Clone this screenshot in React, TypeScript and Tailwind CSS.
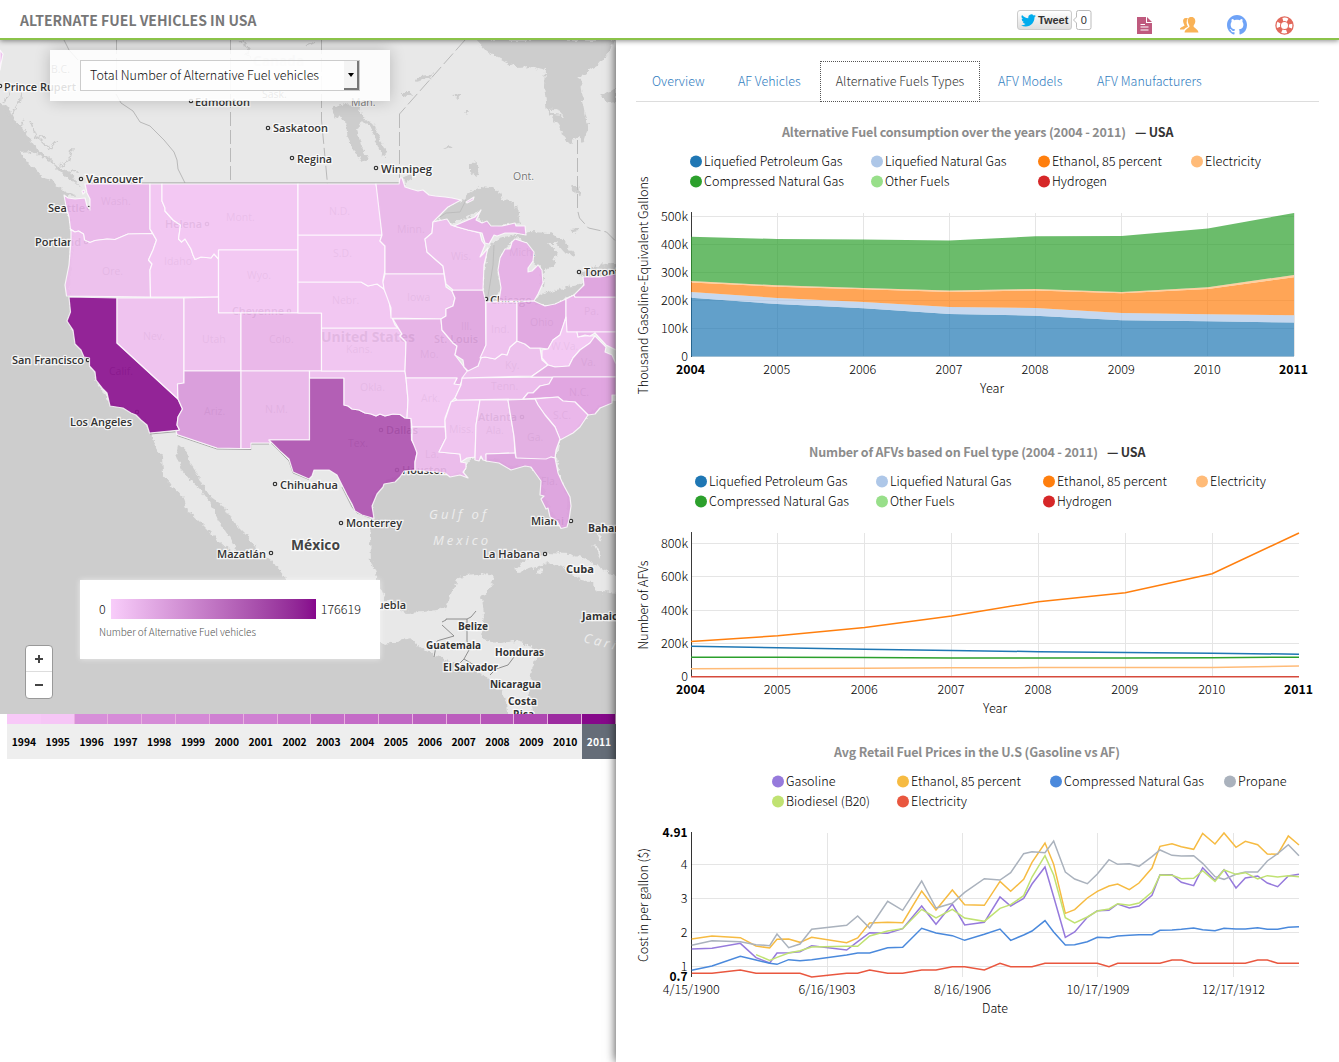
import React from "react";

const BODY = "font-['Noto_Sans_CJK_SC','Open_Sans',sans-serif]";

const STATES: [string, string][] = [
  ["#e9b4e9", "85,184 150,184 150,229 152.5,233.5 128,234 115,239.5 107,239 95,240.5 90,242.5 84.5,240 83.5,234 78.5,231 75,232 70.5,229 69,217 66,206 64,195 68,198 75,199 85,198 87,206 90,210 90,199 87,193"],
  ["#edbded", "71,230 75,232 78.5,231 83.5,234 84.5,240 90,242.5 95,240.5 107,239 115,239.5 128,234 152.5,233.5 156.5,240 153,250 148.5,260 152,264 150,270 150.5,297 66.5,296 65,285 69,265 71,240"],
  ["#8b128f", "69,297 117,298 117,343 178,399 182.5,409 178,417 177,425 179.5,430 149.5,433 147,425 141,420 136,415 131,413 123,408 110,406 107,393 103,389 96,380 95,372 89.5,366 89.5,358 84,357 81,350 75,344 73,330 67,321 70.5,312"],
  ["#efbfef", "117,298 184,298 184,383 177.5,384 178,399 117,343"],
  ["#f2c3f2", "150,184 162,184 162,201 165,208 165,211 173,220 180.5,225 178.5,239 181.5,242 185,239 191,249 193,255 195,259.5 201,257 211,258 214,254 218.5,259 218.5,297 150.5,297 150,270 152,264 148.5,260 153,250 156.5,240 152,232 150,229"],
  ["#f3c4f3", "162,184 298,184 298,250 218.5,250 218.5,259 214,254 211,258 201,257 195,259.5 193,255 191,249 185,239 181.5,242 178.5,239 180.5,225 173,220 165,211 165,208 162,201"],
  ["#f3c5f3", "218.5,250 298,250 298,313 218.5,313"],
  ["#efbfef", "184,298 218.5,297 218.5,313 241,313 241,371 184,371"],
  ["#e9b3e8", "241,313 321.5,313 321.5,371 241,371"],
  ["#d898da", "184,371 241,371 241,448.5 217,448 177,434.5 176,431 179.5,430 177,425 178,417 182.5,409 178,399 177.5,384 184,383"],
  ["#e9b5e9", "241,371 309.5,371 309.5,440 269,440 271,443 251,443 251,448.5 241,448.5"],
  ["#ae53b0", "309.5,378 344,378 344,405 348,406 352,409 359,410 365,413 371,414 376,416 380,414 385,416 393,414 400,414.5 405,418 411,418.5 411.5,440 416,448 417,453 415,462 415,470 404,471 400,477 395,482 384,484 383,487 377,494 372,506 374,518.5 362,515 355,511 352,504 347,495 342,485 337,475 329,470 314,470 312,476 309,479 293,472 289,459 280,451 269,440 309.5,440"],
  ["#eebeee", "309.5,371 405,371 406,378 408,400 407,418 405,418 400,414.5 393,414 385,416 380,414 376,416 371,414 365,413 359,410 352,409 348,406 344,405 344,378 309.5,378"],
  ["#f1c2f1", "321.5,328 398,328 402,334 400,336 406,342 405,371 321.5,371"],
  ["#f2c3f2", "298,282 361,282 368,286 377,284 384,289 389,300 391,315 395,325 398,328 321.5,328 321.5,313 298,313"],
  ["#f3c5f3", "298,235 382,235 380,241 385,246 385,270 383,280 384,289 377,284 368,286 361,282 298,282"],
  ["#f3c5f3", "298,184 376,184 380,205 382,235 298,235"],
  ["#e9b5e9", "376,184 399,184 400,178 402,178 405,187 411,189 418,191 423,190 429,195 435,196 445,197 452,198 461,200 448,207 440,215 433,222 432,233 425,239 427,252 436,260 443,266 444,274 385,274 385,246 380,241 382,235"],
  ["#efc0ef", "385,274 444,274 446,287 452,291 455,298 453,306 446,309 446,316 441,319 391,318 391,308 384,289 383,282"],
  ["#e6afe6", "393,319 441,319 442,330 453,343 457,346 455,355 464,367 468,372 463,378 460,385 454,384 457,378 406,378 405,371 406,342 400,336 402,334"],
  ["#f2c4f2", "406,378 457,378 454,384 461,385 455,398 451,402 445,418 445,427 412,427 411,418.5 407,418 408,400"],
  ["#eab7ea", "412,427 445,427 446,438 439,452 460,454 461,462 466,463 466,468 463,472 468,478 460,475 450,477 445,473 437,472 425,471 415,470 415,462 417,453 412,440"],
  ["#f0c1f0", "457,400 480,400 476,425 475,457 467,458 461,462 460,454 439,452 446,438 445,420 451,402"],
  ["#edbded", "480,400 508,400 514,436 515,453 486,454 487,461 483,460 481,456 479,461 475,460 476,425"],
  ["#ebb8eb", "462,378 553,377 549,384 540,386 533,393 528,393 523,399 457,400 455,398 461,385"],
  ["#edbded", "468,370 478,366 480,358 485,357 495,359 502,354 507,355 510,347 517,341 525,344 530,348 540,348 542,360 548,365 532,376 462,378"],
  ["#dfa4df", "453,290 483,290 485.5,301 486,345 481,358 478,366 468,371 464,367 463,360 455,355 457,346 453,343 442,330 441,319 446,316 446,309 453,306 455,298 452,291"],
  ["#edbced", "433,222 447,219 451,225 457,227 468,230 480,233 482,241 485,245 480,257 483,254 488,248 484,265 483,290 453,290 446,284 443,266 436,260 427,252 425,239 432,233"],
  ["#e5ade5", "454,226 475,217 481,210 476,220 482,223 487,221 491,226 502,226 515,223 516,226 525,226 526,235 515,233 505,233 497,236 494,235 489,244 485,243 482,233 468,230"],
  ["#e5ade5", "515,239 527,243 534,252 533,261 528,268 528,272 532,271 538,265 542,270 543,283 538,294 534,301 499,301 501,288 498,270 500,258 505,249 510,249 512,242"],
  ["#efbfef", "486,302 517,302 517,341 510,347 507,355 502,354 495,359 485,357 480,358 486,345"],
  ["#dfa3df", "517,302 534,301 545,306 555,304 566,299 566,317 563,327 560,335 553,340 548,349 540,348 530,348 525,344 517,341"],
  ["#e9b3e9", "566,299 574,295 575,297 616,297 616,332 566,332"],
  ["#dd9fdd", "574,295 584,285 583,277 600,277 616,274 616,297 575,297"],
  ["#f3c6f3", "566,317 567,332 577,332 578,337 585,336 595,336 590,343 580,350 573,358 569,366 555,367 548,365 542,358 542,350 548,349 553,340 560,335"],
  ["#e1a8e1", "531,377 548,365 555,367 569,366 573,358 580,350 590,343 595,336 606,347 605,352 612,355 616,364 616,377"],
  ["#e9b3e9", "577,332 616,332 616,350 606,345 595,333 590,336 585,335 578,337"],
  ["#df9fdf", "553,377 616,377 616,395 612,395 612,403 600,408 595,414 588,415 575,402 563,401 558,397 523,399 528,393 533,393 540,386 549,384"],
  ["#e9b2e9", "535,399 558,397 563,401 575,402 588,415 580,427 573,433 560,440 555,427 545,415 538,405"],
  ["#e2aae2", "508,400 535,399 538,405 545,415 555,427 560,439 556,450 555,458 551,457 549,460 516,458 514,436"],
  ["#dc9fdd", "486,454 515,453 516,458 546,459 551,457 555,458 558,473 563,484 570,497 571,506 569,520 567,527 561,528.5 557,521 550,517 548,508 546,509 541,499 544,496 540,495 541,481 531,467 525,466 511,470 499,463 486,461"],
];

const LAKES = [
  // Hudson and James Bay
  "476,40 487,52 503,60 517,68 530,67 545,71 544,86 547,111 557,125 565,138 572,145 575,138 580,135 583,143 588,125 583,100 581,80 577,78 597,66 610,50 613,40",
  // Superior
  "435,222 447,208 463,199 470,193 480,187 490,188 498,189 503,200 515,202 518,212 520,223 507,225 490,226 480,220 477,211 466,217 453,223 440,219",
  // Michigan
  "500,238 515,234 516,239 507,247 500,257 498,270 501,287 497,300 485,303 483,275 487,256 484,254 490,246",
  // Huron
  "513,236 530,232 550,233 565,242 575,256 566,254 556,243 548,243 557,253 553,267 545,270 543,286 540,284 540,268 532,258 531,248 523,240",
  // Erie
  "533,301 547,292 567,287 583,284 582,290 565,299 552,305 537,305",
  // Ontario
  "578,275 593,267 616,263 616,276 587,278",
  // Winnipeg
  "332,108 345,104 358,108 366,120 374,125 380,140 385,148 386,157 381,155 376,143 372,130 362,120 357,130 361,145 368,160 362,163 353,148 346,133 345,120 335,115",
  "416,82 420,76 426,75 433,72 430,78 424,80",
  "401,92 410,92 412,95 405,97",
  "453,95 462,94 460,98 456,97",
  "465,111 470,111 468,114",
  "443,148 449,145 453,146 446,149",
  "470,163 475,161 480,168 477,176 470,172",
  "404,177 411,174 412,180 406,184",
  "600,95 610,92 616,88 616,102 608,103",
  "570,229 578,228 578,231 572,232",
  "570,186 578,186 580,195 573,190",
];

const PLACES: { t: string; x: number; y: number; w: number; dot?: [number, number]; s?: number; c?: string }[] = [
  { t: "Prince Rupert", x: 4, y: 90.5, w: 72, dot: [0, 86] },
  { t: "Edmonton", x: 195, y: 105.5, w: 55, dot: [191, 101] },
  { t: "Saskatoon", x: 273, y: 132, w: 55, dot: [268, 128] },
  { t: "Regina", x: 297, y: 162.5, w: 35, dot: [292, 158] },
  { t: "Winnipeg", x: 381, y: 172.5, w: 51, dot: [376, 168] },
  { t: "Vancouver", x: 86, y: 183, w: 57, dot: [81, 179] },
  { t: "Seattle", x: 48, y: 212, w: 37, dot: [89, 208] },
  { t: "Portland", x: 35, y: 246, w: 46, dot: [86, 242] },
  { t: "San Francisco", x: 12, y: 364, w: 72, dot: [88, 360] },
  { t: "Los Angeles", x: 70, y: 426, w: 62, dot: [137, 412] },
  { t: "Helena", x: 165, y: 228, w: 37, dot: [207, 224] },
  { t: "Cheyenne", x: 232, y: 315, w: 52, dot: [289, 311] },
  { t: "United States", x: 321, y: 342, w: 94, s: 13.5 },
  { t: "St. Louis", x: 434, y: 343, w: 44 },
  { t: "Chicago", x: 490, y: 304, w: 42, dot: [486, 299] },
  { t: "Toronto", x: 584, y: 276, w: 42, dot: [579, 272] },
  { t: "Atlanta", x: 478, y: 421, w: 39, dot: [522, 417] },
  { t: "Dallas", x: 386, y: 434, w: 32, dot: [381, 430] },
  { t: "Houston", x: 402, y: 474, w: 45, dot: [397, 470] },
  { t: "Chihuahua", x: 280, y: 488.5, w: 58, dot: [275, 484] },
  { t: "Monterrey", x: 346, y: 527, w: 56, dot: [341, 523] },
  { t: "México", x: 291, y: 549.5, w: 49, s: 14.2, c: "#444" },
  { t: "Mazatlán", x: 217, y: 557.5, w: 49, dot: [271, 553] },
  { t: "Miami", x: 531, y: 525, w: 33, dot: [571, 521] },
  { t: "Bahamas", x: 588, y: 532, w: 48, s: 10.2 },
  { t: "La Habana", x: 483, y: 558, w: 57, dot: [545, 554] },
  { t: "Cuba", x: 566, y: 573, w: 28, s: 10.8 },
  { t: "Puebla", x: 370, y: 608.5, w: 36 },
  { t: "Jamaica", x: 582, y: 619.5, w: 42, s: 10.2 },
  { t: "Belize", x: 458, y: 630, w: 30, s: 10.2 },
  { t: "Guatemala", x: 426, y: 649, w: 55, s: 10.2 },
  { t: "Honduras", x: 495, y: 655.5, w: 49, s: 10.2 },
  { t: "El Salvador", x: 443, y: 671, w: 55, s: 10.2 },
  { t: "Nicaragua", x: 490, y: 687.5, w: 51, s: 10.2 },
  { t: "Costa", x: 508, y: 704.5, w: 29, s: 10.2 },
  { t: "Rica", x: 513, y: 718, w: 21, s: 10.2 },
];

const REGIONS: [string, number, number][] = [
  ["B.C.", 51, 73], ["Sask.", 262, 98], ["Man.", 351, 106], ["Ont.", 513, 180],
  ["Wash.", 101, 205], ["Ore.", 102, 275], ["Idaho", 164, 265], ["Mont.", 226, 221], ["Wyo.", 247, 279],
  ["Nev.", 143, 340], ["Utah", 202, 343], ["Colo.", 269, 343], ["Calif.", 109, 375], ["Ariz.", 204, 415],
  ["N.M.", 265, 413], ["N.D.", 329, 215], ["S.D.", 333, 257], ["Nebr.", 332, 304], ["Kans.", 346, 353],
  ["Okla.", 360, 391], ["Tex.", 348, 447], ["Minn.", 397, 233], ["Iowa", 407, 301], ["Mo.", 420, 358],
  ["Ark.", 421, 402], ["La.", 425, 458], ["Wis.", 451, 260], ["Ill.", 461, 330], ["Mich.", 509, 256],
  ["Ind.", 491, 333], ["Ohio", 530, 326], ["Pa.", 584, 315], ["W.Va.", 551, 350], ["Va.", 581, 366],
  ["Ky.", 505, 369], ["Tenn.", 491, 390], ["N.C.", 569, 396], ["S.C.", 553, 419], ["Miss.", 449, 433],
  ["Ala.", 486, 434], ["Ga.", 527, 441], ["Fla.", 541, 485],
];

function UsMap() {
  return (
    <svg viewBox="0 40 616 674" className="block h-[674px] w-[616px]" fontFamily="Open Sans">
      <defs>
        {/* roughens the coastlines */}
        <filter id="coast" filterUnits="userSpaceOnUse" x="-10" y="30" width="640" height="694">
          <feTurbulence type="fractalNoise" baseFrequency=".18" numOctaves="3" seed="4" />
          <feDisplacementMap in="SourceGraphic" scale="7" xChannelSelector="R" yChannelSelector="G" />
        </filter>
      </defs>
      <rect x="0" y="40" width="616" height="674" fill="#cdcdcd" />
      <g filter="url(#coast)">
        <g fill="#e8e8e8">
          <path d="M-10 30H630V395L600 406 588 415 573 432 560 440 556 458 560 475 567 495 568 520 562 524 552 512 545 495 543 481 529 465 511 466 495 458 470 460 464 472 450 474 415 468 400 475 384 482 373 498 372 517 370 535 371 562 378 582 386 600 405 613 425 612 446 608 452 592 457 579 468 575 482 573 494 576 490 588 482 597 484 615 481 638 500 643 515 641 528 644 536 655 531 675 529 698 537 724H509L507 702 500 690 488 678 470 668 445 660 425 651 410 638 385 644 350 635 315 618 290 595 284 576 272 561 258 551 247 536 235 524 225 508 211 498 203 485 198 474 190 462 185 449 178 446 176 455 182 470 190 480 201 490 210 502 219 522 228 535 236 550 232 553 219 541 200 522 188 511 184 498 172 487 163 474 162 456 153 442 151 432 143 419 123 406 110 403 98 384 91 364 79 347 70 322 70 290 72 240 67 195 75 196 82 190 70 172 58 167 48 158 37 149 29 138 23 127 14 120 9 108 -10 96Z" />
          <path d="M21 152 33 151 41 157 52 163 64 175 76 183 83 191 84 197 73 194 62 189 50 180 43 178 36 170 28 164Z" />
          <path d="M514 570 526 560 545 553 570 554 588 560 600 567 626 583 626 593 598 592 593 583 578 578 563 566 548 563 533 568 520 572Z" />
          <path d="M538 569l4 1-1 4-4-1z" />
          <path d="M592 543l8 8 1 8-4-6zM594 529l8 8-2 5z" />
          <path d="M606 619l20-4v8z" />
        </g>
        <g fill="#cdcdcd">
          {LAKES.map((p) => (
            <polygon key={p} points={p} />
          ))}
        </g>
        <path d="M549 109q8-2 15 7l-10-1z" fill="#e8e8e8" />
        <path d="M240 40l10 8-4 6 6 4M307 45l8-4M4 110l14 18 6-8M20 100l-8 14M30 120l6 16 10 2M36 136l12 12M10 90l-6 12M22 92l-2 12M48 150l8-10M60 166l10-6 2-12M66 170l12 2" fill="none" stroke="#cdcdcd" strokeWidth="1.500" />
      </g>
      <g fill="none" stroke="#b9b9b9" strokeWidth="1">
        <path d="M64 40l5 10 9 10M116 94l5 9 12 8 7 11 10 4 14 14 10 12 3 8 1 9 7 14" />
        <path d="M230.500 40V184M116.500 40V94M321.500 40V120l6 64M399.500 114V178M465 40L399.500 114M577.500 140V210l2 8 9 10 18 4 10 10" strokeDasharray="14 4" />
        <path d="M432 222l14-9 14-1 6-12M494 245l-1 20-4 25-2 12" strokeWidth=".8" />
        <path d="M88 183H399" stroke="#999" />
      </g>
      <g fill="none" stroke="#777" strokeWidth=".8">
        <path d="M442 622l4-2V619H467V641M442 625l12 11-14 4-3 1-3 16M467 619l4-2 5-6M467 641l2 9-5 9 10 6M464 659l-4 4M490 675l6-6 12-4 6-8" />
        <path d="M150 434l29-2.500M177 435.500l40 13.500 34 .5 0-5.500 18 0M269 441l20 20 4 12 16 6.500M342 487l5 10 5 10 5 6 16 6" strokeOpacity=".7" />
      </g>
      <g fontSize="13" fontStyle="italic" fill="#eeeeee" letterSpacing="3">
        <text x="429" y="519" textLength="60">Gulf of</text>
        <text x="433" y="545" textLength="58">Mexico</text>
        <text x="583" y="642" transform="rotate(14 583 642)">Caribbean</text>
      </g>
      <text x="253" y="66" fontSize="13.500" fontWeight="600" fill="#d0d0d0" textLength="51">Canada</text>
      <g fontSize="10.500" fill="#777" stroke="#fff" strokeWidth="1.600" paintOrder="stroke" strokeOpacity=".5">
        {REGIONS.map(([t, x, y]) => (
          <text key={t} x={x} y={y}>{t}</text>
        ))}
      </g>
      {PLACES.map((p) => (
        <g key={p.t}>
          {p.dot && <circle cx={p.dot[0]} cy={p.dot[1]} r="1.700" fill="#fff" stroke="#333" strokeWidth="1.200" />}
          <text x={p.x} y={p.y} fontSize={p.s ?? 10.9} fontWeight={p.s ? 700 : 600} fill={p.c ?? "#333"} stroke="#fff" strokeWidth="2.500" strokeOpacity=".8" paintOrder="stroke" textLength={p.w} lengthAdjust="spacingAndGlyphs">
            {p.t}
          </text>
        </g>
      ))}
      <g stroke="#fff" strokeWidth="1.200" strokeOpacity=".8" strokeLinejoin="round" fillOpacity=".92">
        {STATES.map(([c, p]) => (
          <polygon key={p} points={p} fill={c} />
        ))}
        <path d="M466 202l8-5-1 3-6 3zM0 50l3 4-2 10-1 6zM82 191l2-1 1 2-2 2z" fill="#edbded" />
      </g>
    </svg>
  );
}

function Label({ x, y, w, children, bold, anchor = "middle" }: { x: number; y: number; w?: number; children: string; bold?: boolean; anchor?: "start" | "middle" | "end" }) {
  return (
    <text x={x} y={y} textAnchor={anchor} textLength={w} lengthAdjust="spacingAndGlyphs" fontWeight={bold ? 700 : 300}>
      {children}
    </text>
  );
}

const YEARS = ["2004", "2005", "2006", "2007", "2008", "2009", "2010", "2011"];

function YearAxis({ step, y }: { step: number; y: number }) {
  return (
    <>
      {YEARS.map((t, i) => (
        <Label key={t} x={690.5 + i * step} y={y} bold={i === 0 || i === 7} w={i === 0 || i === 7 ? 29 : 27}>{t}</Label>
      ))}
    </>
  );
}

const AREAS: [string, number[], number[]][] = [
  ["#1f77b4", [297.7, 304, 308.3, 314, 315.7, 320.3, 321.3, 322.5], [356.5, 356.5, 356.5, 356.5, 356.5, 356.5, 356.5, 356.5]],
  ["#aec7e8", [292, 298, 302, 307, 308, 313, 314.3, 315.3], [297.7, 304, 308.3, 314, 315.7, 320.3, 321.3, 322.5]],
  ["#ff7f0e", [282.5, 286.7, 289.2, 292, 290.5, 293.3, 288.9, 277.3], [292, 298, 302, 307, 308, 313, 314.3, 315.3]],
  ["#ffbb78", [281, 285.3, 288, 290.6, 289, 291.9, 287.2, 275], [282.5, 286.7, 289.2, 292, 290.5, 293.3, 288.9, 277.3]],
  ["#2ca02c", [236.7, 239, 239.5, 240.5, 236.3, 236, 228.5, 213], [281, 285.3, 288, 290.6, 289, 291.9, 287.2, 275]],
];

const line = (ys: number[], step: number) => ys.map((y, i) => `${691 + i * step},${y}`);

function ConsumptionChart() {
  const step = 603 / 7;
  return (
    <svg viewBox="616 195 723 210" className="block h-[210px] w-[723px] overflow-visible text-[12.500px]">
      <g stroke="#e5e5e5" shapeRendering="crispEdges">
        {YEARS.map((t, i) => <path key={t} d={`M${691 + i * step} 213V356`} />)}
        {[216.5, 244.5, 272.5, 300.5, 328.5, 356.5].map((y) => <path key={y} d={`M691 ${y}H1294`} />)}
      </g>
      <path d="M691.500 212V357" stroke="#000" strokeOpacity=".75" />
      {AREAS.map(([c, top, bottom]) => (
        <polygon key={c} fill={c} fillOpacity=".7" points={[...line(top, step), ...line(bottom, step).reverse()].join(" ")} />
      ))}
      {["500k", "400k", "300k", "200k", "100k"].map((t, i) => (
        <Label key={t} x={688} y={221 + i * 28} anchor="end" w={27}>{t}</Label>
      ))}
      <Label x={688} y={361} anchor="end">0</Label>
      <YearAxis step={step} y={374} />
      <Label x={992} y={393} w={24}>Year</Label>
      <text transform="translate(648 285.500) rotate(-90)" textAnchor="middle" textLength="218" fontWeight="300">Thousand Gasoline-Equivalent Gallons</text>
    </svg>
  );
}

const SERIES: [string, number[]][] = [
  ["#1f77b4", [646.3, 647.8, 649.3, 650.4, 651.7, 652.5, 653.2, 654.2]],
  ["#2ca02c", [657.2, 657.2, 657.6, 658, 658, 658, 657.7, 657.2]],
  ["#ffbb78", [668.8, 668.5, 668.2, 667.8, 667.6, 667.5, 667.4, 666]],
  ["#ff7f0e", [641.4, 635.8, 627.4, 616, 601.7, 592.7, 573.7, 533]],
  ["#d64a3c", [676.7, 676.7, 676.7, 676.7, 676.7, 676.7, 676.7, 676.7]],
];

function VehiclesChart() {
  const step = 608 / 7;
  return (
    <svg viewBox="616 515 723 210" className="block h-[210px] w-[723px] overflow-visible text-[12.500px]">
      <g stroke="#e5e5e5" shapeRendering="crispEdges">
        {YEARS.slice(0, 7).map((t, i) => <path key={t} d={`M${691 + i * step} 533V677`} />)}
        {[543.5, 576.5, 610.5, 643.5, 676.5].map((y) => <path key={y} d={`M691 ${y}H1299`} />)}
      </g>
      <path d="M691.500 532V677" stroke="#000" strokeOpacity=".75" />
      {SERIES.map(([c, ys]) => (
        <polyline key={c} fill="none" stroke={c} strokeWidth="1.500" points={line(ys, step).join(" ")} />
      ))}
      {["800k", "600k", "400k", "200k"].map((t, i) => (
        <Label key={t} x={688} y={548 + i * 33.4} anchor="end" w={27}>{t}</Label>
      ))}
      <Label x={688} y={681} anchor="end">0</Label>
      <YearAxis step={step} y={694} />
      <Label x={995} y={713} w={24}>Year</Label>
      <text transform="translate(648 605) rotate(-90)" textAnchor="middle" textLength="89" fontWeight="300">Number of AFVs</text>
    </svg>
  );
}

const PRICE_X = [185, 246, 331, 378, 419, 441, 476, 510, 545, 650, 683, 719, 773, 818, 875, 918, 967, 1004, 1063, 1110, 1142, 1181, 1206, 1245, 1271, 1306, 1334, 1372, 1402, 1437, 1463, 1498, 1527, 1566, 1590, 1626, 1654, 1691, 1718, 1755, 1782, 1818, 1846, 1883, 1912, 1943, 1975, 2007];

const PRICES: [string, number, number[]][] = [
  ["#967adc", 0, [627, 625, 610, 653, 669, 639, 638, 635, 617, 630, 605, 578, 580, 566, 498, 553, 492, 555, 547, 471, 498, 475, 432, 381, 470, 592, 576, 532, 512, 511, 492, 504, 498, 466, 404, 404, 427, 437, 383, 421, 389, 444, 414, 408, 429, 440, 408, 403]],
  ["#f6bb42", 0, [597, 588, 593, 618, 624, 598, 597, 607, 592, 608, 594, 549, 547, 548, 453, 510, 450, 494, 496, 424, 454, 418, 367, 309, 373, 520, 509, 474, 454, 438, 432, 449, 429, 384, 319, 311, 320, 328, 280, 312, 279, 322, 304, 314, 342, 343, 288, 315]],
  ["#4a89dc", 0, [691, 678, 649, 660, 670, 673, 659, 662, 659, 645, 639, 639, 623, 622, 565, 579, 587, 601, 583, 567, 601, 585, 573, 542, 576, 615, 614, 605, 592, 593, 588, 586, 584, 584, 571, 570, 568, 564, 569, 572, 565, 567, 567, 563, 568, 568, 562, 560]],
  ["#aab2bd", 0, [616, 602, 605, 614, 617, 582, 623, 612, 568, 556, 528, 564, 484, 511, 423, 504, 490, 457, 416, 420, 398, 341, 335, 338, 303, 396, 417, 431, 402, 359, 373, 371, 379, 350, 330, 346, 348, 347, 370, 410, 418, 403, 396, 396, 363, 341, 314, 347]],
  ["#c0e272", 3, [644, 661, 652, 639, 632, 621, 619, 619, 588, 573, 566, 508, 534, 508, 534, 544, 505, 494, 467, 411, 347, 405, 533, 549, 531, 513, 507, 491, 496, 489, 456, 405, 406, 416, 415, 392, 424, 390, 403, 398, 417, 407, 411, 407, 410]],
  ["#e9573f", 0, [700, 700, 690, 700, 700, 700, 700, 700, 711, 700, 700, 690, 700, 700, 690, 690, 680, 680, 690, 670, 680, 680, 680, 670, 670, 670, 670, 670, 670, 680, 670, 670, 670, 670, 670, 660, 660, 670, 670, 670, 670, 670, 670, 660, 660, 670, 670, 670]],
];

function PricesChart() {
  return (
    <svg viewBox="616 815 723 210" className="block h-[210px] w-[723px] overflow-visible text-[12.500px]">
      <g stroke="#e5e5e5" shapeRendering="crispEdges">
        <path d="M827.500 833V977M962.500 833V977M1097.500 833V977M1233.500 833V977" />
        <path d="M691 864.500H1299M691 898.500H1299M691 932.500H1299M691 966.500H1299" />
      </g>
      <path d="M691.500 832V977" stroke="#000" strokeOpacity=".8" />
      {[["4", 869], ["3", 903], ["2", 937], ["1", 971]].map(([t, y]) => (
        <Label key={t} x={687.5} y={Number(y)} anchor="end">{String(t)}</Label>
      ))}
      <Label x={687.5} y={837} anchor="end" bold w={25}>4.91</Label>
      <Label x={687.5} y={981} anchor="end" bold w={18}>0.7</Label>
      <g transform="translate(630 740) scale(.33333)" fill="none" strokeWidth="4.500">
        {PRICES.map(([c, from, ys]) => (
          <polyline key={c} stroke={c} points={ys.map((y, i) => `${PRICE_X[i + from]},${y}`).join(" ")} />
        ))}
      </g>
      <Label x={691.3} y={994} w={57}>4/15/1900</Label>
      <Label x={827} y={994} w={57}>6/16/1903</Label>
      <Label x={962.5} y={994} w={57}>8/16/1906</Label>
      <Label x={1098} y={994} w={63}>10/17/1909</Label>
      <Label x={1233.5} y={994} w={63}>12/17/1912</Label>
      <Label x={995} y={1013} w={26}>Date</Label>
      <text transform="translate(648 905) rotate(-90)" textAnchor="middle" textLength="114" fontWeight="300">Cost in per gallon ($)</text>
    </svg>
  );
}

function Legend({ cols, items }: { cols: string; items: [string, string, number][] }) {
  return (
    <ul className={`grid ${cols}`}>
      {items.map(([c, t, w], i) => (
        <li key={i} className="h-5">
          <svg className="block h-5 w-[150px] overflow-visible text-[12.500px]">
            <circle cx="6" cy="10.500" r="6" fill={c} />
            <text x="14" y="15" fontWeight="300" textLength={w} lengthAdjust="spacingAndGlyphs">{t}</text>
          </svg>
        </li>
      ))}
    </ul>
  );
}

const FUELS: [string, string, number][] = [
  ["#1f77b4", "Liquefied Petroleum Gas", 138.5],
  ["#aec7e8", "Liquefied Natural Gas", 121.5],
  ["#ff7f0e", "Ethanol, 85 percent", 110],
  ["#ffbb78", "Electricity", 56],
  ["#2ca02c", "Compressed Natural Gas", 140],
  ["#98df8a", "Other Fuels", 64.5],
  ["#d62728", "Hydrogen", 55],
];

function Title({ text, w, shift, suffix }: { text: string; w: number; shift: string; suffix?: boolean }) {
  return (
    <h3 className={`flex h-[20px] items-center text-[12.500px] leading-5 font-bold whitespace-nowrap ${shift}`}>
      <svg className="block h-5 w-[410px] overflow-visible" fill="#8c8c8c">
        <text x="0" y="15" textLength={w}>{text}</text>
        {suffix && <text x={w + 9} y="15" fill="#333" textLength="38.500">— USA</text>}
      </svg>
    </h3>
  );
}

const TIMELINE: [number, string][] = [
  [1994, "bg-[#f8c9f8]"], [1995, "bg-[#f6c6f6]"], [1996, "bg-[#d78fd9]"], [1997, "bg-[#d68cd8]"], [1998, "bg-[#d58bd7]"], [1999, "bg-[#d489d6]"],
  [2000, "bg-[#cf80d2]"], [2001, "bg-[#cf80d2]"], [2002, "bg-[#cb79ce]"], [2003, "bg-[#c56ec8]"], [2004, "bg-[#c46bc7]"], [2005, "bg-[#c067c4]"],
  [2006, "bg-[#bd62c0]"], [2007, "bg-[#bb5dbd]"], [2008, "bg-[#b655b8]"], [2009, "bg-[#ae48b1]"], [2010, "bg-[#9c2ba0]"], [2011, "bg-[#86088a]"],
];

export default function App() {
  return (
    <div className={`h-[1062px] w-[1339px] overflow-hidden bg-white text-[#333] ${BODY}`}>
      <header className="relative z-30 flex h-[40px] items-start justify-between border-b-2 border-[#8bc34a] bg-white pr-[45px] pl-5 shadow-[0_1px_5px_rgba(0,0,0,0.45)]">
        <h1 className="pt-[8px] text-[14px] leading-6 font-bold tracking-[0.01px] text-[#777]">ALTERNATE FUEL VEHICLES IN USA</h1>
        <div className="flex items-start">
          <div className="mt-[10px] flex h-5 w-[55px] items-center gap-[2px] rounded-[3px] border border-[#ccc] bg-gradient-to-b from-white to-[#dedede] pl-[3px] font-['Liberation_Sans',sans-serif] text-[11px] font-bold text-[#333]">
            <svg viewBox="0 0 24 24" className="h-[15px] w-[15px]" fill="#00aced">
              <path d="M23.950 4.570a10 10 0 0 1-2.820.770 4.960 4.960 0 0 0 2.160-2.720c-.950.550-2 .960-3.130 1.180a4.920 4.920 0 0 0-8.380 4.480C7.690 8.090 4.070 6.130 1.640 3.160a4.920 4.920 0 0 0 1.520 6.570 4.900 4.900 0 0 1-2.230-.610v.060a4.920 4.920 0 0 0 3.950 4.820 5 5 0 0 1-2.210.090 4.940 4.940 0 0 0 4.600 3.420A9.870 9.870 0 0 1 0 19.540a14 14 0 0 0 7.550 2.210c9.050 0 14-7.500 14-13.980 0-.210 0-.420-.020-.630a9.940 9.940 0 0 0 2.460-2.550z" />
            </svg>
            <span className="pt-px">Tweet</span>
          </div>
          <svg className="mt-[10px] h-5 w-[22px] overflow-visible font-['Liberation_Sans',sans-serif] text-[11px]">
            <path d="M6.500 .5h10.500q2 0 2 2v15q0 2-2 2h-10.500q-2 0-2-2V13l-3-3 3-3V2.500q0-2 2-2z" fill="#fff" stroke="#bbb" />
            <text x="8.700" y="14" fill="#333">0</text>
          </svg>
          <svg viewBox="0 0 15 17" className="mt-[17px] ml-[43px] h-[17px] w-[15px]" fill="#bf5a7e">
            <path d="M0 0H9V6H15V17H0ZM10 0L15 5H10Z" />
            <path d="M3.500 7.500H8M3.500 10H11.500M3.500 13H11.500" stroke="#fff" strokeWidth="1.200" />
          </svg>
          <svg viewBox="0 0 19 16" className="mt-[17px] ml-[28px] h-4 w-[19px]" fill="#f9b256">
            <path d="M6 1C3.500 1 2.800 3 3.200 5S4.500 8 4.500 8.500 1 10 0 11.500V12.500H4Q5 11 8 9.800 7 8 6.600 6 6.500 2.500 8 1.200 7 .8 6 1Z" />
            <path d="M11.500 0C8.500 0 7.500 2 7.900 4.700S9.700 8.300 9.500 9.500 5 12 4.500 15.500H18.500C18 12 14 10.700 13.600 9.500S15.200 7 15.300 4.700 14.500 0 11.500 0Z" />
          </svg>
          <svg viewBox="0 0 16 16" className="mt-[15px] ml-[28px] h-5 w-5" fill="#6fa3f7">
            <path d="M8 0C3.580 0 0 3.580 0 8c0 3.540 2.290 6.530 5.470 7.590.4.070.550-.170.550-.380 0-.190-.010-.820-.010-1.490-2.010.370-2.530-.490-2.690-.940-.090-.230-.480-.940-.820-1.130-.280-.150-.680-.520-.010-.530.630-.010 1.080.580 1.230.820.720 1.210 1.870.870 2.330.660.070-.520.280-.870.510-1.070-1.780-.200-3.640-.890-3.640-3.950 0-.870.310-1.590.820-2.150-.080-.200-.360-1.020.080-2.120 0 0 .670-.210 2.200.820.640-.180 1.320-.270 2-.270s1.360.090 2 .270c1.530-1.040 2.200-.820 2.200-.820.440 1.100.160 1.920.080 2.120.510.560.820 1.270.820 2.150 0 3.070-1.870 3.750-3.650 3.950.290.250.540.730.540 1.480 0 1.070-.010 1.930-.010 2.200 0 .210.150.460.550.380A8.010 8.010 0 0 0 16 8c0-4.420-3.580-8-8-8z" />
          </svg>
          <svg viewBox="0 0 20 20" className="mt-[16px] ml-[28px] h-[19px] w-[19px]" fill="none">
            <circle cx="10" cy="10" r="6.700" stroke="#e2695c" strokeWidth="6" />
            <circle cx="10" cy="10" r="6.500" stroke="#fff" strokeWidth="3.600" strokeDasharray="5.200 5.010" strokeDashoffset="2.600" />
          </svg>
        </div>
      </header>

      <div className="flex h-[1022px]">
        <section className="relative w-[616px] shrink-0">
          <UsMap />
          <div className="absolute top-[10px] left-[50px] flex h-[51px] w-[340px] items-center bg-white/85 pl-[30px] shadow-[0_0_15px_rgba(0,0,0,0.2)]">
            <div className="flex h-[31px] w-[280px] items-center justify-between border border-[#ccc] bg-white/50 pl-[9px] text-[12.500px] font-light text-[#111]">
              <span className="whitespace-nowrap">Total Number of Alternative Fuel vehicles</span>
              <span className="flex h-full w-[15px] items-center justify-center border-r-2 border-b-2 border-[#777] bg-[#f4f4f4]">
                <span className="border-x-[3px] border-t-4 border-x-transparent border-t-black" />
              </span>
            </div>
          </div>
          <div className="absolute top-[540px] left-[80px] h-[79px] w-[300px] bg-white px-[19px] pt-[19px] shadow-[0_0_6px_rgba(255,255,255,0.6)]">
            <div className="flex h-5 items-center gap-[5px] text-[12.500px] font-light text-[#111]">
              <span>0</span>
              <span className="h-5 w-[205px] bg-gradient-to-r from-[#f8cdfa] to-[#86058c]" />
              <span>176619</span>
            </div>
            <p className="mt-[5px] text-[10px] leading-4 font-light tracking-[-0.05px] text-[#555]">Number of Alternative Fuel vehicles</p>
          </div>
          <div className="absolute top-[605px] left-[25px] flex h-[54px] w-[28px] flex-col rounded-[4px] border border-[#999] bg-white">
            <span className="flex h-[26px] items-center justify-center border-b border-[#ddd]">
              <svg className="h-2 w-2"><path d="M0 4H8M4 0V8" stroke="#444" strokeWidth="2" /></svg>
            </span>
            <span className="flex h-[26px] items-center justify-center">
              <svg className="h-2 w-2"><path d="M0 4H8" stroke="#444" strokeWidth="2" /></svg>
            </span>
          </div>
          <ol className="ml-[7px] flex h-[45px] text-[10.300px] font-bold text-black">
            {TIMELINE.map(([year, color], i) => (
              <li key={year} className="flex flex-1 flex-col">
                <span className={i === 0 ? "h-[10px] bg-[#f8c9f8]" : `h-[10px] border-r border-[#e8b0e0] ${color}`} />
                <span className={i === 17 ? "flex flex-1 items-center justify-center bg-[#656d78] text-white" : "flex flex-1 items-center justify-center bg-[#eeeeee]"}>{year}</span>
              </li>
            ))}
          </ol>
        </section>

        <main className="relative z-20 w-[723px] bg-white shadow-[0_0_10px_rgba(0,0,0,0.75)]">
          <nav className="mx-5 flex h-[62px] items-end border-b border-[#ddd] text-[12.500px] font-light whitespace-nowrap text-[#2f7cc0]">
            <a className="-mb-px flex h-[41px] w-[86px] items-center pl-4">Overview</a>
            <a className="-mb-px flex h-[41px] w-[98px] items-center pl-4">AF Vehicles</a>
            <a className="-mb-px flex h-[41px] w-[160px] items-center justify-center border border-dotted border-[#555] bg-white text-[#333]">Alternative Fuels Types</a>
            <a className="-mb-px flex h-[41px] w-[101px] items-center pl-[18px]">AFV Models</a>
            <a className="-mb-px flex h-[41px] items-center pl-4">AFV Manufacturers</a>
          </nav>

          <div className="h-[320px] pt-5">
            <Title text="Alternative Fuel consumption over the years (2004 - 2011)" w={344} shift="ml-[166px]" suffix />
            <div className="mt-[9px] ml-[74px]">
              <Legend cols="grid-cols-[181px_167px_153px_150px]" items={FUELS} />
            </div>
            <div className="mt-[4px]"><ConsumptionChart /></div>
          </div>

          <div className="h-[300px] pt-5">
            <Title text="Number of AFVs based on Fuel type (2004 - 2011)" w={289} shift="ml-[193px]" suffix />
            <div className="mt-[9px] ml-[79px]">
              <Legend cols="grid-cols-[181px_167px_153px_150px]" items={FUELS} />
            </div>
            <div className="mt-[4px]"><VehiclesChart /></div>
          </div>

          <div className="pt-5">
            <Title text="Avg Retail Fuel Prices in the U.S (Gasoline vs AF)" w={286} shift="ml-[218px]" />
            <div className="mt-[9px] ml-[156px]">
              <Legend
                cols="grid-cols-[125px_153px_174px_100px]"
                items={[
                  ["#967adc", "Gasoline", 49.5],
                  ["#f6bb42", "Ethanol, 85 percent", 110],
                  ["#4a89dc", "Compressed Natural Gas", 140],
                  ["#aab2bd", "Propane", 48.5],
                  ["#c0e272", "Biodiesel (B20)", 84],
                  ["#e9573f", "Electricity", 56],
                ]}
              />
            </div>
            <div className="mt-[4px]"><PricesChart /></div>
          </div>
        </main>
      </div>
    </div>
  );
}
